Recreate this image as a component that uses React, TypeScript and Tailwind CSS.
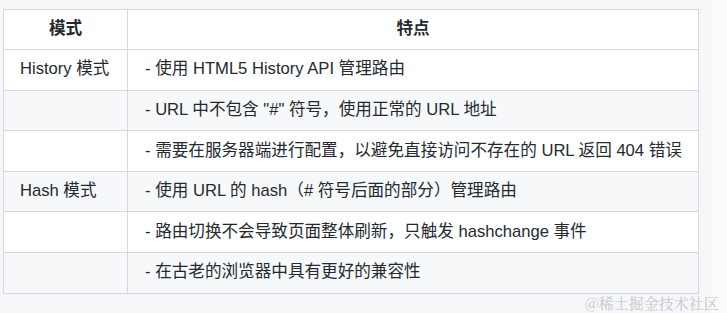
import React from "react";

const rows: [string, string][] = [
  ["History 模式", "- 使用 HTML5 History API 管理路由"],
  ["", '- URL 中不包含 "#" 符号，使用正常的 URL 地址'],
  ["", "- 需要在服务器端进行配置，以避免直接访问不存在的 URL 返回 404 错误"],
  ["Hash 模式", "- 使用 URL 的 hash（# 符号后面的部分）管理路由"],
  ["", "- 路由切换不会导致页面整体刷新，只触发 hashchange 事件"],
  ["", "- 在古老的浏览器中具有更好的兼容性"],
];

export default function App() {
  return (
    <div
      className="relative w-[727px] h-[313px] bg-[#f6f7f8] overflow-hidden"
      style={{ fontFamily: '"Liberation Sans", "Noto Sans CJK SC", sans-serif' }}
    >
      <div className="flex h-full">
        <div className="w-[712px] pl-[3px] pt-[9px]">
          <table className="border-collapse text-[16.6px] text-[#24292f] w-[696px] table-fixed">
            <colgroup>
              <col className="w-[124px]" />
              <col />
            </colgroup>
            <thead>
              <tr className="h-[40px] bg-white">
                <th className="border border-[#d5d9de] font-bold text-center">模式</th>
                <th className="border border-[#d5d9de] font-bold text-center">特点</th>
              </tr>
            </thead>
            <tbody>
              {rows.map((r, i) => (
                <tr
                  key={i}
                  className={i % 2 === 0 ? "h-[40.6px] bg-white" : "h-[40.6px] bg-[#f6f8fa]"}
                >
                  <td className="border border-[#d5d9de] pl-[16px] whitespace-nowrap">{r[0]}</td>
                  <td className="border border-[#d5d9de] pl-[17px] whitespace-nowrap">{r[1]}</td>
                </tr>
              ))}
            </tbody>
          </table>
        </div>
        <div className="flex-1 bg-[#fafbfc]" />
      </div>
      <div
        className="absolute left-[585px] top-[295px] text-[15px] leading-none text-[#c4c6c9] whitespace-nowrap"
        style={{ fontFamily: '"Noto Serif CJK SC", "Noto Sans CJK SC", serif' }}
      >
        @稀土掘金技术社区
      </div>
    </div>
  );
}
